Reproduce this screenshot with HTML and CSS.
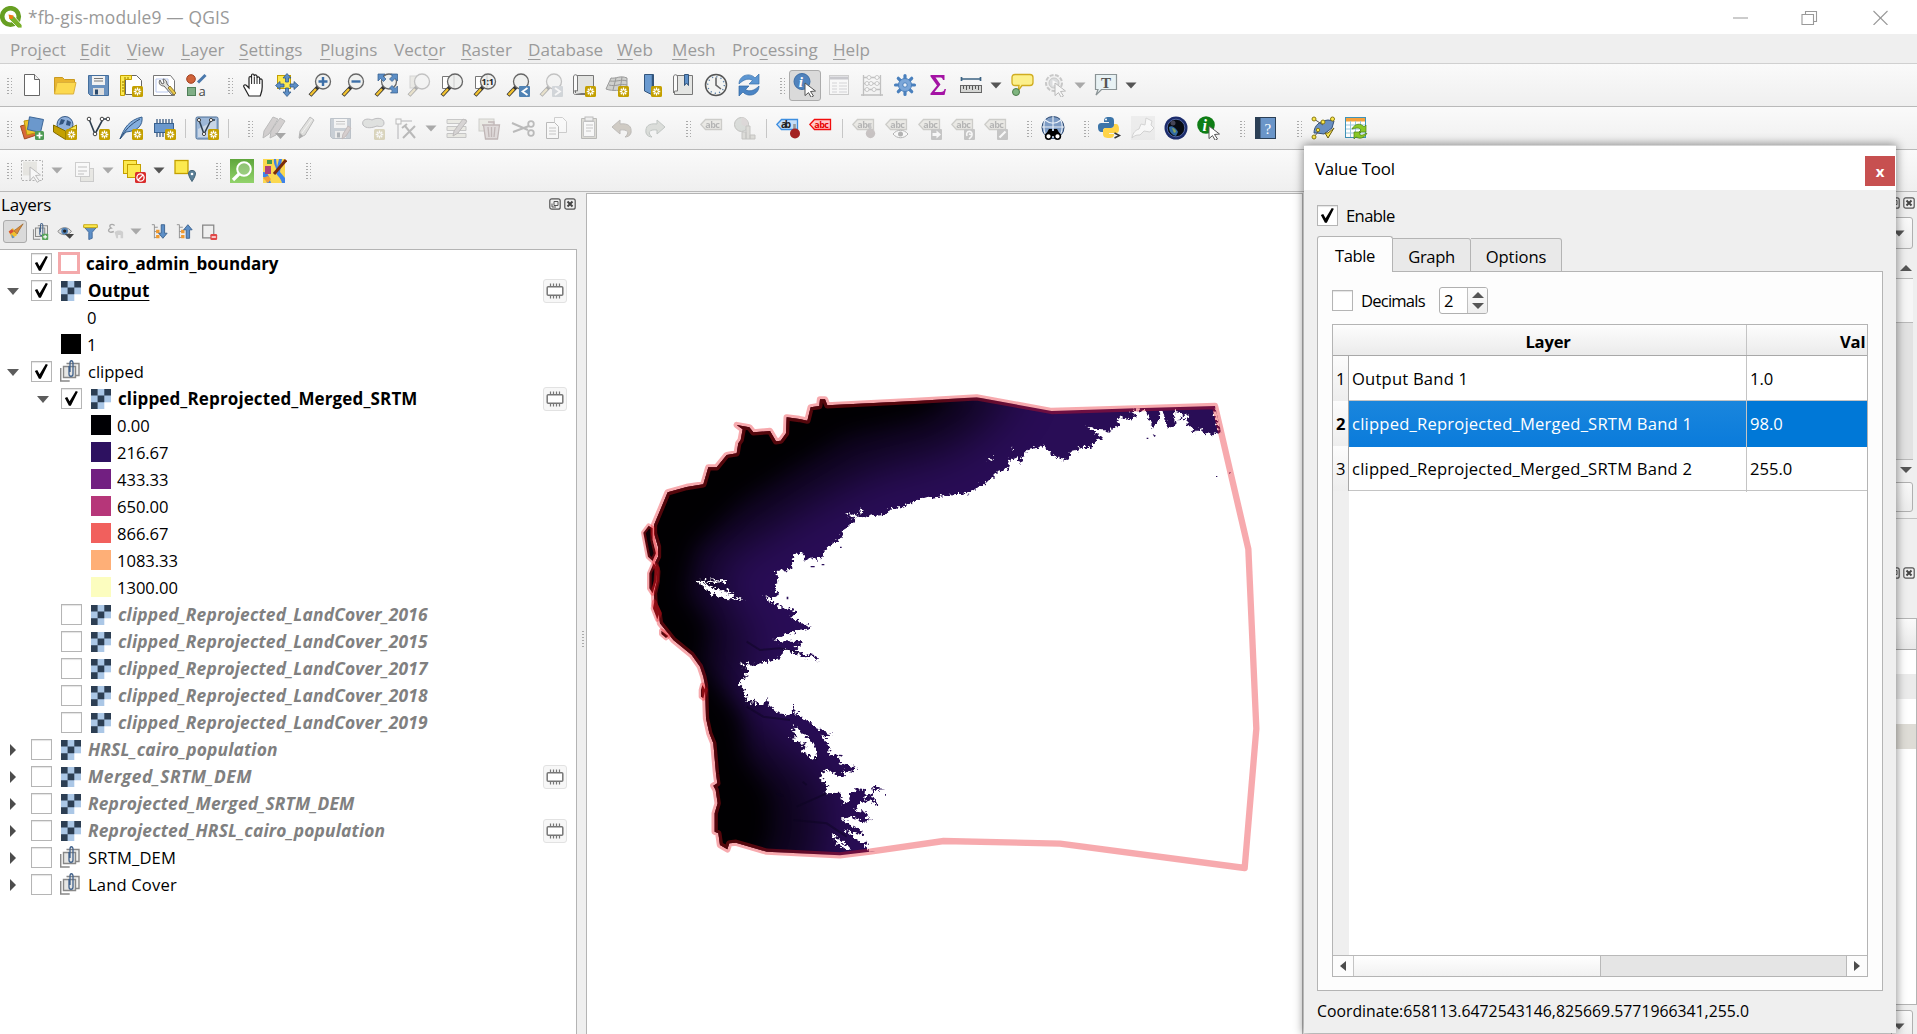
FILE: index.html
```html
<!DOCTYPE html>
<html lang="en">
<head>
<meta charset="utf-8">
<title>*fb-gis-module9 — QGIS</title>
<link rel="stylesheet" href="styles.css">
</head>
<body>
<svg class="defs" width="0" height="0">
<defs>
<linearGradient id="gg" x1="0" y1="0" x2="0" y2="1"><stop offset="0" stop-color="#5fa63c"/><stop offset="1" stop-color="#92d36b"/></linearGradient>
<symbol id="star" viewBox="0 0 24 24"><rect x="13" y="13" width="11" height="11" rx="1.500" fill="#c4a000"/><path d="M18.500 14.500v8M14.700 18.500h7.600M15.800 15.800l5.400 5.400M21.200 15.800l-5.400 5.400" stroke="#fff" stroke-width="1.300"/><circle cx="18.500" cy="18.500" r="1.200" fill="#c4a000"/></symbol>
<symbol id="new" viewBox="0 0 24 24"><path d="M4.500 1.500h10l5 5v16h-15z" fill="#fff" stroke="#666"/><path d="M14.500 1.500v5h5" fill="#eee" stroke="#666"/></symbol>
<symbol id="open" viewBox="0 0 24 24"><path d="M1.500 21V4.500h8l2 2h10V9" fill="#e9b52f" stroke="#c99a20"/><path d="M1.500 21L4 9.500h19L20.500 21z" fill="#fcd94f" stroke="#dcb03a"/></symbol>
<symbol id="save" viewBox="0 0 24 24"><path d="M2.500 2.500h20v20h-18l-2-2z" fill="#6a92c0" stroke="#456f9d"/><rect x="6" y="3" width="13" height="9" fill="#f2f2f2"/><path d="M8 5.500h9M8 8h9" stroke="#777" stroke-width="1.200"/><rect x="7" y="15" width="11" height="7" fill="#ddd"/><rect x="9" y="16.500" width="3" height="5" fill="#2b4a6c"/></symbol>
<symbol id="layout" viewBox="0 0 24 24"><path d="M6.500 2.500h11l5 5v14h-16z" fill="#fff" stroke="#666"/><path d="M1.500 2.500h11v4h-7v16h-4z" fill="#fce94f" stroke="#c4a000"/><path d="M3 9h2M3 12h2M3 15h2M3 18h2M6 4v2M9 4v2" stroke="#8f7600"/><use href="#star"/></symbol>
<symbol id="manager" viewBox="0 0 24 24"><path d="M1.500 2.500h17l4 5v15h-21z" fill="#fff" stroke="#777"/><path d="M4 6h12v13H4z" fill="none" stroke="#b9c8ee"/><path d="M8 7c-2 3 0 6 4 6l8 9 3-2-8-9c0-3-2-5-4-5l1 4-2 1z" fill="#e0e0dc" stroke="#666"/><path d="M16 15l6 7 2-2-6-7z" fill="#e9c94c" stroke="#7a6420" stroke-width=".8"/></symbol>
<symbol id="style" viewBox="0 0 24 24"><circle cx="6" cy="6" r="4.300" fill="#d0633a" stroke="#a04020"/><path d="M13 9.500L20.500 2" stroke="#4a78ac" stroke-width="3"/><rect x="2.500" y="14.500" width="8" height="8" fill="#7fae86" stroke="#4f7f58"/><text x="13.500" y="22.500" font-size="13" font-family="Open Sans,sans-serif" fill="#444">a</text></symbol>
<symbol id="hand" viewBox="0 0 24 24"><path d="M7 23L2 14c-1-2 1-3 2.500-1.500L7 15V5c0-2 2.500-2 2.500 0V2.500c0-2 2.700-2 2.700 0V3c0-1.500 2.800-1.500 2.800.5V5c0-1.500 2.700-1.500 2.700.5V7c0-1.500 2.500-1.500 2.500.5V14c0 4-1 6-2 9z" fill="#fff" stroke="#222" stroke-width="1.200"/><path d="M9.600 5v6M12.300 3.500V11M15 5v6M17.700 7v4" stroke="#222"/></symbol>
<symbol id="pan" viewBox="0 0 24 24"><rect x="2.500" y="2.500" width="13" height="13" fill="#fce94f" stroke="#c4a000"/><g fill="#5d8fc7" stroke="#345c8a" stroke-width=".8"><path d="M12 .5l4 4.500h-2.500v4h-3V5H8zM12 23.500l4-4.500h-2.500v-4h-3v4H8zM.5 12.500l4.500-4v2.500h4v3H5v2.500zM23.500 12.500l-4.500-4v2.500h-4v3h4v2.500z"/></g></symbol>
<symbol id="glass" viewBox="0 0 24 24"><path d="M10 14L2 22.500" stroke="#333" stroke-width="4"/><path d="M8 16L2.500 22" stroke="#f2c230" stroke-width="2.400"/><circle cx="15" cy="8.500" r="7.500" fill="#eff0ef" stroke="#666" stroke-width="1.300"/></symbol>
<symbol id="zin" viewBox="0 0 24 24"><use href="#glass"/><path d="M15 4v9M10.500 8.500h9" stroke="#3d6fa8" stroke-width="2.400"/></symbol>
<symbol id="zout" viewBox="0 0 24 24"><use href="#glass"/><path d="M10.500 8.500h9" stroke="#3d6fa8" stroke-width="2.400"/></symbol>
<symbol id="zfull" viewBox="0 0 24 24"><use href="#glass"/><path d="M4 1h7L9 3l3 3-2.500 2.500-3-3L4 8zM23.500 1h-7l2 2-3 3L18 8.500l3-3L23.500 8zM23.500 20h-7l2-2-3-3 2.500-2.500 3 3 2.500-2.500z" fill="#5d8fc7" stroke="#345c8a" stroke-width=".7"/></symbol>
<symbol id="zsel" viewBox="0 0 24 24"><rect x="3" y="3" width="12" height="12" fill="#d8d5b8" stroke="#999"/><use href="#glass"/></symbol>
<symbol id="zlay" viewBox="0 0 24 24"><path d="M2.500 3.500h7v12h-7z" fill="#fff" stroke="#777"/><use href="#glass"/><path d="M14 2v13" stroke="#ccc"/></symbol>
<symbol id="znat" viewBox="0 0 24 24"><use href="#zlay"/><text x="8.500" y="12" font-size="9" font-weight="bold" font-family="Open Sans,sans-serif" fill="#222">1:1</text></symbol>
<symbol id="zlast" viewBox="0 0 24 24"><use href="#glass"/><rect x="13" y="13" width="11" height="11" rx="1" fill="#5083b5"/><path d="M21.500 15l-5 3.500 5 3.500" fill="none" stroke="#fff" stroke-width="1.800"/></symbol>
<symbol id="znext" viewBox="0 0 24 24"><use href="#glass"/><rect x="13" y="13" width="11" height="11" rx="1" fill="#8da5bd"/><path d="M16 15l5 3.500-5 3.500" fill="none" stroke="#fff" stroke-width="1.800"/></symbol>
<symbol id="nmap" viewBox="0 0 24 24"><path d="M3.500 2.500h18v18h-18z" fill="#e2e3e1" stroke="#777"/><path d="M1.500 20V4c0-3 4-3 4 0v14c-3-1-4 0-4 2 0 1 1 1.500 2 1.500h10" fill="#fafafa" stroke="#777"/><use href="#star"/></symbol>
<symbol id="n3d" viewBox="0 0 24 24"><path d="M6 5c5 1 9-3 16 0v13c-8-2-13 1-21-2z" fill="#cfd0ce" stroke="#999"/><path d="M4 12c7 2 11-2 18 0M11 5L8 17M17 4l-2 13M5 8c7 1 11-2 17 0" fill="none" stroke="#999"/><use href="#star"/></symbol>
<symbol id="bmk" viewBox="0 0 24 24"><path d="M6.500 1.500h9v21L6.500 18z" fill="#6a9ad0" stroke="#33557c"/><path d="M14.500 2v18" stroke="#33557c" stroke-width="1.500"/><use href="#star"/></symbol>
<symbol id="sbm" viewBox="0 0 24 24"><path d="M3.500 2.500h18v19h-18z" fill="#e4e5e3" stroke="#777"/><path d="M2.500 20V4c0-3 4-3 4 0v14h-2c-2 0-2 2 0 3.500" fill="#fafafa" stroke="#777"/><path d="M13.500 1.500h4v11l-2-2.500-2 2.500z" fill="#5d8fc7" stroke="#33557c"/></symbol>
<symbol id="clock" viewBox="0 0 24 24"><circle cx="12" cy="12" r="10.500" fill="#f3f4f2" stroke="#555" stroke-width="1.500"/><circle cx="12" cy="12" r="8.300" fill="none" stroke="#5a7fa8" stroke-width="1.400" stroke-dasharray="1.200 3.150"/><path d="M12 4.500V12l5 4" fill="none" stroke="#666" stroke-width="1.600"/></symbol>
<symbol id="refresh" viewBox="0 0 24 24"><path d="M2 11c0-9 11-12 16-6l4-4v10H12l3.500-3.500C12 5 7 6 2 11z" fill="#5c96d2" stroke="#3b72ae" stroke-width=".7"/><path d="M22 13c0 9-11 12-16 6l-4 4V13h10l-3.500 3.500C12 19 17 18 22 13z" fill="#4a84c4" stroke="#2f66a2" stroke-width=".7"/></symbol>
<symbol id="arrowc" viewBox="0 0 24 24"><path d="M12 10l10.500 8-5 .5 3 4.500-2.300 1.300-2.700-4.700-3.500 3z" fill="#fff" stroke="#555"/></symbol>
<symbol id="ident" viewBox="0 0 24 24"><circle cx="9" cy="8.500" r="8" fill="#5083bd" stroke="#3d6ea5"/><text x="5.800" y="14" font-size="15" font-weight="bold" font-style="italic" font-family="Liberation Serif,serif" fill="#fff">i</text><use href="#arrowc"/></symbol>
<symbol id="table" viewBox="0 0 24 24"><rect x="2.500" y="2.500" width="19" height="19" fill="#fff" stroke="#888"/><path d="M3 5h18" stroke="#779" stroke-width="3"/><path d="M5 10h5M12 10h8M5 13h5M12 13h8M5 16h5M12 16h8M5 19h5M12 19h8" stroke="#99a" stroke-width="1.200"/></symbol>
<symbol id="abacus" viewBox="0 0 24 24"><path d="M3.500 23V2M20.500 23V2M1 22h22M3 4.500h18M3 10.500h18M3 16.500h18" stroke="#666" stroke-width="1.300" fill="none"/><g fill="#fff" stroke="#777"><circle cx="9" cy="4.500" r="2"/><circle cx="17" cy="4.500" r="2"/><circle cx="7" cy="10.500" r="2"/><circle cx="11" cy="10.500" r="2"/><circle cx="17" cy="10.500" r="2"/><circle cx="7" cy="16.500" r="2"/><circle cx="14" cy="16.500" r="2"/></g></symbol>
<symbol id="gear" viewBox="0 0 24 24"><g stroke="#4a80bd" stroke-width="3.200" stroke-linecap="round"><path d="M12 2.500v19M2.500 12h19M5.300 5.300l13.400 13.400M18.700 5.300L5.300 18.700"/></g><circle cx="12" cy="12" r="6.500" fill="#7ba6d8" stroke="#4a80bd"/><circle cx="12" cy="12" r="2.200" fill="#eef3fa" stroke="#4a80bd"/></symbol>
<symbol id="sigma" viewBox="0 0 24 24"><path d="M4.500 2h14v5h-1.500c-.5-2-1.500-2.500-3-2.500H9.500l5 7-6 7.500H15c2 0 3-.8 3.500-3H20L18.500 22h-14v-1.500L11 12.500 4.500 3.500z" fill="#a413a4"/></symbol>
<symbol id="ruler" viewBox="0 0 24 24"><path d="M2.500 6h19M2.500 4v4M21.500 4v4" stroke="#3d6382" stroke-width="1.700"/><rect x="1.500" y="12.500" width="21" height="7" fill="#d5d6d4" stroke="#666"/><path d="M4.500 13v3M7.500 13v4M10.500 13v3M13.500 13v4M16.500 13v3M19.500 13v4" stroke="#555"/></symbol>
<symbol id="tips" viewBox="0 0 24 24"><path d="M5 1.500h15q3 0 3 3v5q0 3-3 3h-8L8 18l1-5.500H5q-3 0-3-3v-5q0-3 3-3z" fill="#fcf08b" stroke="#d0ac20" stroke-width="1.300"/><circle cx="6" cy="19" r="3.500" fill="#7fb57f" stroke="#4c7a4c"/></symbol>
<symbol id="action" viewBox="0 0 24 24"><circle cx="11" cy="10" r="8" fill="#e6e6e6" stroke="#777" stroke-width="2" stroke-dasharray="4 1.500"/><circle cx="11" cy="10" r="5" fill="#a9b3bd" stroke="#777"/><path d="M9.500 7l5 3-5 3z" fill="#fff"/><use href="#arrowc"/></symbol>
<symbol id="tann" viewBox="0 0 24 24"><path d="M1.500 1.500h21v15h-15L2 22l2-5.500H1.500z" fill="#e8f2f4" stroke="#8b9496" stroke-width="1.200"/><text x="7" y="14.500" font-size="15" font-weight="bold" font-family="Liberation Serif,serif" fill="#555">T</text></symbol>
<symbol id="dsm" viewBox="0 0 24 24"><path d="M.5 10l12-3 4 12-12 4z" fill="#d9693a" stroke="#a14a20"/><path d="M4 5l12-2 3 13-12 3z" fill="#edc42c" stroke="#b8930c"/><path d="M9.500 .8l14 2.700-3 13-13-3z" fill="#6b98cc" stroke="#3d6697"/><rect x="15" y="15" width="9" height="9" rx="1.500" fill="#4e9a54"/><path d="M19.500 16.500v6M16.500 19.500h6" stroke="#fff" stroke-width="1.700"/></symbol>
<symbol id="gpkg" viewBox="0 0 24 24"><circle cx="12" cy="8.500" r="8" fill="#8fb0dc" stroke="#385b86"/><path d="M8 3l4 1-2 4-4 1zM14 4l4 2-1 4-4-1z" fill="#31547f"/><path d="M.5 9l12 6v8.500L.5 16z" fill="#c4a000" stroke="#806a00"/><path d="M23.500 9l-11 6v8.500l11-5z" fill="#fce94f" stroke="#a08500"/><use href="#star"/></symbol>
<symbol id="shp" viewBox="0 0 24 24"><path d="M3 3l6 15L17 3h5" fill="none" stroke="#2e3f50" stroke-width="1.600"/><g fill="#fff" stroke="#444"><circle cx="3" cy="3" r="1.800"/><circle cx="9" cy="18" r="1.800"/><circle cx="16" cy="3" r="1.800"/><circle cx="22" cy="3" r="1.800"/></g><use href="#star"/></symbol>
<symbol id="feather" viewBox="0 0 24 24"><path d="M1 23C5 12 10 4 23 1c1 8-4 14-16 15z" fill="#84aedd" stroke="#38618f"/><path d="M1 23C6 14 12 8 21 3" fill="none" stroke="#2c4d74"/><use href="#star"/></symbol>
<symbol id="chip" viewBox="0 0 24 24"><path d="M5 3v18M8 3v18M11 3v18M14 3v18M17 3v18M20 3v18" stroke="#3a5a80" stroke-width="1.300"/><rect x="2.500" y="7.500" width="19" height="9" fill="#6b98cc" stroke="#38618f"/><use href="#star"/></symbol>
<symbol id="virt" viewBox="0 0 24 24"><rect x="1" y="1" width="22" height="22" rx="1.500" fill="#9db8d8" stroke="#4a6c94"/><path d="M3 21V13L21 4v17z" fill="#c9d6e6"/><path d="M4 4l5 14 7-14h4" fill="none" stroke="#2e3f50" stroke-width="1.500"/><g fill="#fff" stroke="#444"><circle cx="4" cy="4" r="1.600"/><circle cx="9" cy="18" r="1.600"/><circle cx="16" cy="4" r="1.600"/></g><use href="#star"/></symbol>
<symbol id="pencil" viewBox="0 0 24 24"><path d="M4 22l1-7L15 1l4 3L10 19z" fill="#bbb9a9" stroke="#555"/><path d="M17 3L7 17" stroke="#eee"/><path d="M4 23l1-6 3 3z" fill="#333"/></symbol>
<symbol id="pencils" viewBox="0 0 24 24"><path d="M1 22l1-7L11 1l5 2L7 18zM8 22l1-7L18 2l5 3-9 14z" fill="#a08c8c" stroke="#555"/><path d="M13 17h11l-5.500 6z" fill="#222"/></symbol>
<symbol id="saveed" viewBox="0 0 24 24"><use href="#save"/><path d="M14 23l1-5 5-8 3 2-5 8z" fill="#b88" stroke="#855"/></symbol>
<symbol id="poly" viewBox="0 0 24 24"><path d="M2 9c-2-6 5-7 9-5 5-3 12-2 12 3 0 4-4 4-7 3-5 2-11 3-14-1z" fill="#b5bfb5" stroke="#556"/><use href="#star"/></symbol>
<symbol id="vertex" viewBox="0 0 24 24"><path d="M4 23V5h14" fill="none" stroke="#445"/><rect x="2" y="3" width="5" height="5" fill="#fff" stroke="#555"/><path d="M9 22L21 10M11 10l10 12M8 12l5-4" stroke="#555" stroke-width="2"/></symbol>
<symbol id="multi" viewBox="0 0 24 24"><path d="M2 3.500h19v4H2zM2 10.500h19v4H2zM2 17.500h19v4H2z" fill="#d9d6b0" stroke="#777"/><path d="M8 20l1-5 9-12 4 2-9 12z" fill="#a99" stroke="#655"/></symbol>
<symbol id="trash" viewBox="0 0 24 24"><rect x="1" y="3" width="15" height="12" fill="#d9d6b0" stroke="#887"/><path d="M4 9h18M10 6h6v3M5.500 9l2 14h12l2-14zM10 11l1 10M13.500 11v10M17 11l-1 10" fill="#caa" stroke="#844" stroke-width="1.300"/></symbol>
<symbol id="cut" viewBox="0 0 24 24"><path d="M1 7l16 7M2 16l16-6" stroke="#555" stroke-width="2"/><circle cx="20" cy="8" r="2.800" fill="none" stroke="#555" stroke-width="1.800"/><circle cx="20" cy="17" r="2.800" fill="none" stroke="#555" stroke-width="1.800"/></symbol>
<symbol id="copy" viewBox="0 0 24 24"><path d="M10.500 1.500h8l4 4v11h-12z" fill="#fff" stroke="#888"/><path d="M2.500 6.500h8l4 4v12h-12z" fill="#fff" stroke="#555"/><path d="M5 12h7M5 15h7M5 18h7" stroke="#777"/></symbol>
<symbol id="paste" viewBox="0 0 24 24"><path d="M4.500 2.500h15v20h-15z" fill="#b9b08c" stroke="#554"/><path d="M6.500 5.500h11v15h-11z" fill="#fff" stroke="#777"/><rect x="8" y="1" width="8" height="4" fill="#ddd" stroke="#555"/><path d="M9 9h7M9 12h7M9 15h5" stroke="#777"/></symbol>
<symbol id="undo" viewBox="0 0 24 24"><path d="M2 11l8-7v4c8-1 12 2 11 9-1 3-4 4-6 4 5-4 3-8-5-7v4z" fill="#a08250" stroke="#654"/></symbol>
<symbol id="redo" viewBox="0 0 24 24"><path d="M22 11l-8-7v4C6 7 2 10 3 17c1 3 4 4 6 4-5-4-3-8 5-7v4z" fill="#a8b8a0" stroke="#576"/></symbol>
<symbol id="lab" viewBox="0 0 24 24"><path d="M.8 8.500L5.500 3.500h16v10h-16z" fill="#d8d4b8" stroke="#88866e" stroke-width="1.300"/><text x="5.300" y="11.800" font-size="9" font-weight="bold" font-family="Open Sans,sans-serif" fill="#444" textLength="14.500">abc</text></symbol>
<symbol id="labpin" viewBox="0 0 24 24"><use href="#lab"/><circle cx="18.500" cy="17.500" r="4.700" fill="#8a6a6a"/><path d="M18 7v7" stroke="#777" stroke-width="2.500"/></symbol>
<symbol id="labeye" viewBox="0 0 24 24"><use href="#lab"/><path d="M8 18c4-5 11-5 15 0-4 5-11 5-15 0z" fill="#fff" stroke="#444"/><circle cx="15.500" cy="18" r="2.500" fill="#444"/></symbol>
<symbol id="labmov" viewBox="0 0 24 24"><use href="#lab"/><rect x="13" y="13" width="11" height="11" rx="1" fill="#777"/><path d="M14.500 18.500h5" stroke="#fff" stroke-width="3"/><path d="M18.500 14.500l4.500 4-4.500 4z" fill="#fff"/></symbol>
<symbol id="labrot" viewBox="0 0 24 24"><use href="#lab"/><rect x="13" y="13" width="11" height="11" rx="1" fill="#777"/><path d="M16 20c-2-6 6-6 5-1l-3-1M21 20l-3 3" fill="none" stroke="#fff" stroke-width="1.600"/></symbol>
<symbol id="labed" viewBox="0 0 24 24"><use href="#lab"/><rect x="13" y="13" width="11" height="11" rx="1" fill="#777"/><path d="M15.500 21.500l6-6" stroke="#fff" stroke-width="2.200"/></symbol>
<symbol id="labblue" viewBox="0 0 24 24"><path d="M.8 8.500L5.500 3.500h16v10h-16z" fill="#c5def8" stroke="#3d8ee0" stroke-width="1.300"/><text x="5" y="11.800" font-size="10" font-weight="bold" font-family="Open Sans,sans-serif" fill="#222" textLength="10">ab</text><path d="M18.500 8v7" stroke="#999" stroke-width="2.600"/><circle cx="19" cy="17.500" r="5" fill="#a42222"/></symbol>
<symbol id="labred" viewBox="0 0 24 24"><path d="M.8 8.500L5.500 3.500h16v10h-16z" fill="#ffc9c9" stroke="#f20d0d" stroke-width="1.300"/><text x="5.300" y="11.800" font-size="9" font-weight="bold" font-family="Open Sans,sans-serif" fill="#e60000" textLength="14.500">abc</text></symbol>
<symbol id="diag" viewBox="0 0 24 24"><circle cx="8.500" cy="8.500" r="7" fill="#a0b5a0" stroke="#665"/><path d="M8.500 8.500V1.500a7 7 0 0 1 6 10z" fill="#c0a0a0"/><path d="M9 23v-7h4v7zM13 23V10h4v13zM17 23v-4h5v4z" fill="#b9b39a" stroke="#776"/></symbol>
<symbol id="meta" viewBox="0 0 24 24"><circle cx="12" cy="11.500" r="11" fill="#7e9cc4" stroke="#2c4870"/><path d="M1 11h22M12 0v22M4 4c5 4 11 4 16 0M5 0c-3 8-3 14 0 20M19 1c3 8 3 12 0 19" fill="none" stroke="#eaf0f8" stroke-width="1.100"/><path d="M4 20l4-7h3v2h2v-2h3l4 7z" fill="#000"/><circle cx="7.500" cy="20.300" r="2.900" fill="#fff" stroke="#000" stroke-width="1.600"/><circle cx="16.500" cy="20.300" r="2.900" fill="#fff" stroke="#000" stroke-width="1.600"/></symbol>
<symbol id="py" viewBox="0 0 24 24"><path d="M6 6c0-4 1-5 5-5s5 1 5 4v4c0 2-1 3-3 3H8c-2 0-3 1-3 3v1H4c-3 0-4-2-4-5s1-4 4-4h7V6z" fill="#3c75a9"/><path d="M16 8h2c2 0 3 2 3 5s-1 4-3 4h-7v1h5c0 3-1 4-5 4s-6-1-6-4v-3c0-2 1-3 3-3h5c2 0 3-1 3-3z" fill="#ffd448"/><circle cx="8" cy="3.500" r="1" fill="#fff"/><path d="M16.500 17l5 2.500-5 2.500" fill="none" stroke="#333" stroke-width="1.400"/></symbol>
<symbol id="plug" viewBox="0 0 24 24"><rect width="24" height="24" fill="#ddd"/><path d="M1 22c1-6 4-8 7-9l2-5 4 1 1-7 6 3-1 4 3 3-4 4-6-1-4 4c-3 0-5 0-8 3z" fill="#fff" stroke="#999"/></symbol>
<symbol id="globe" viewBox="0 0 24 24"><circle cx="12" cy="12" r="11.500" fill="#1c2c6c"/><circle cx="12" cy="12" r="8.800" fill="#070b12" stroke="#6278b8" stroke-width=".8"/><path d="M5 11c3-2 7 1 9 5l-2 4c-4-1-7-4-7-9z" fill="#326ba4"/><path d="M8 12c2 0 4 2 4 4l-2 1z" fill="#85a45f"/><circle cx="9" cy="7" r="2.500" fill="#445"/></symbol>
<symbol id="ginfo" viewBox="0 0 24 24"><circle cx="9" cy="9" r="8.800" fill="#0f7d16"/><text x="5.500" y="14.500" font-size="16" font-weight="bold" font-style="italic" font-family="Liberation Serif,serif" fill="#fff">i</text><use href="#arrowc"/></symbol>
<symbol id="help" viewBox="0 0 24 24"><rect x="1.500" y="1.500" width="20" height="21" fill="#6a95c8" stroke="#2b3f55"/><rect x="1.500" y="1.500" width="5" height="21" fill="#2b3f55"/><text x="10.500" y="17.500" font-size="15" font-family="Liberation Serif,serif" fill="#fff">?</text></symbol>
<symbol id="topo" viewBox="0 0 24 24"><path d="M3 17C3 9 9 5 17 4l6 1-2 7-8 6-7-1z" fill="#6a8fc0" stroke="#33517a"/><path d="M3 3l9 6M3 21l4-5" stroke="#555"/><g fill="#fce94f" stroke="#8a7a10"><circle cx="3" cy="3" r="2"/><circle cx="21.500" cy="3" r="2"/><circle cx="12" cy="6" r="2"/><circle cx="3" cy="21" r="2"/><circle cx="7" cy="14" r="1.700"/></g><path d="M14 17l3 5 6-10-6 5z" fill="#fce94f" stroke="#6a5c10"/></symbol>
<symbol id="tref" viewBox="0 0 24 24"><rect x="1.500" y="1.500" width="20" height="20" fill="#fff" stroke="#3f93b8"/><rect x="2" y="2" width="19" height="3.500" fill="#f5a13d"/><path d="M2 9h19M2 13h19M2 17h19M6.500 5v16M11.500 5v16M16.500 5v16" stroke="#9cc8dc"/><path d="M8 13c3-6 9-6 12-2l2-2v7h-7l2-2c-2-3-5-2-9 -1zM23 17c-3 6-8 6-11 4l-2 2v-7h7l-2 2c2 2 4 1 8-1z" fill="#8ac926" stroke="#4c7f10" stroke-width=".7"/></symbol>
<symbol id="selr" viewBox="0 0 24 24"><rect x="1.500" y="1.500" width="21" height="20" fill="none" stroke="#444" stroke-dasharray="2 1.500"/><rect x="3" y="2.500" width="14" height="14" fill="#cfcab0"/><path d="M10 8l10.500 8-5 .5 4 5.500-2.300 1.300-3.700-5.700-3.500 4z" fill="#fff" stroke="#555"/></symbol>
<symbol id="self" viewBox="0 0 24 24"><rect x="9.500" y="9.500" width="13" height="13" fill="#d6d2bb" stroke="#888"/><rect x="4.500" y="3.500" width="14" height="14" fill="#fff" stroke="#888"/><path d="M7 8h9M7 12h9M7 15h6" stroke="#999" stroke-width="1.600"/></symbol>
<symbol id="desel" viewBox="0 0 24 24"><rect x="1.500" y="1.500" width="13" height="13" fill="#fce94f" stroke="#c4a000"/><rect x="5.500" y="5.500" width="13" height="13" fill="#fce94f" stroke="#c4a000"/><rect x="13" y="13" width="11" height="11" rx="1.500" fill="#d92c2c"/><circle cx="18.500" cy="18.500" r="3.600" fill="none" stroke="#fff" stroke-width="1.300"/><path d="M16 21l5-5" stroke="#fff" stroke-width="1.300"/></symbol>
<symbol id="selloc" viewBox="0 0 24 24"><rect x="2" y="1.500" width="13" height="13" fill="#fce94f" stroke="#c4a000" stroke-width="1.300"/><path d="M19 22.500c-6-9-3-11 0-11s6 2 0 11z" fill="#5b8098" stroke="#436377"/><circle cx="19" cy="15" r="1.300" fill="#fff"/></symbol>
<symbol id="gsearch" viewBox="0 0 24 24"><rect width="24" height="24" fill="url(#gg)"/><circle cx="14" cy="10" r="6.800" fill="#b5d8a4" fill-opacity=".5" stroke="#fff" stroke-width="2"/><path d="M9 15l-6 6" stroke="#fff" stroke-width="3.200"/></symbol>
<symbol id="mapb" viewBox="0 0 24 24"><rect width="22" height="24" fill="#fbd84f"/><path d="M0 13c6 0 6 6 8 11H4c-1-4-2-6-4-6zM11 0c-1 6 3 8 2 12s5 6 6 12h3v-5l-5-6 2-13h-3l-2 8-1-8z" fill="#3f83e8"/><rect x="2" y="7" width="6" height="8" fill="#b0407a"/><rect x="4" y="1" width="5" height="4" fill="#4a9a4a"/><path d="M0 19l5-2 3 3-3 4z" fill="#f3a23a"/><path d="M11 15L23 1" stroke="#7b2d0c" stroke-width="3"/></symbol>
<symbol id="dd" viewBox="0 0 12 7"><path d="M.5.5h11l-5.500 6z"/></symbol>
<symbol id="ras" viewBox="0 0 20 20"><rect width="20" height="20" fill="#abc7e6"/><path d="M0 0h6.600v6.600H0zM13.300 0H20v6.600h-6.700zM6.600 6.600h6.700v6.700H6.600zM0 13.300h6.600V20H0z" fill="#2c3e53"/><path d="M13.300 13.300H20V20h-6.700z" fill="#fff"/></symbol>
<symbol id="grp" viewBox="0 0 20 22"><path d="M.7 8v13h9" fill="none" stroke="#888" stroke-width="1.500"/><path d="M6.500 3.500h12.500v12h-3" fill="#f2f2f0" stroke="#888" stroke-width="1.400"/><path d="M3.500 6.500h12v11h-12z" fill="#e6e6e4" stroke="#888" stroke-width="1.400"/><path d="M9 6v8c0 3 4 3 4 0V3c0-3-3-3-3 0v9" fill="none" stroke="#41618a" stroke-width="1.300"/></symbol>
<symbol id="mem" viewBox="0 0 20 20"><path d="M5.500 2.500v15M8.500 2.500v15M11.500 2.500v15M14.500 2.500v15" stroke="#777" stroke-width="1.200"/><rect x="2.200" y="5.700" width="15.600" height="8.600" rx="1" fill="#fff" stroke="#777" stroke-width="1.500"/></symbol>
<symbol id="chk" viewBox="0 0 20 20"><path d="M3 9.500l2.500-1 2.500 4.500L14.500 2l2.200 .8L9.300 17.500H7.300z" fill="#000"/></symbol>
<symbol id="float" viewBox="0 0 12 12"><rect x=".8" y=".8" width="10.400" height="10.400" rx="2" fill="none" stroke="#555" stroke-width="1.200"/><path d="M5 3.500h4v4H5zM3 5.500v3.500h4" fill="none" stroke="#555"/></symbol>
<symbol id="close" viewBox="0 0 12 12"><rect x=".8" y=".8" width="10.400" height="10.400" rx="2" fill="none" stroke="#555" stroke-width="1.200"/><path d="M3.500 3.500l5 5M8.500 3.500l-5 5" stroke="#444" stroke-width="2"/></symbol>
</defs>
</svg>

<div class="app">
<header class="titlebar">
  <svg class="logo" viewBox="0 0 22 22"><circle cx="10.500" cy="10.500" r="8.300" fill="none" stroke="#679f22" stroke-width="4.600"/><path d="M9 9l5 1 8 9v3h-4L9 13z" fill="#7ab02a" stroke="#fff" stroke-width=".8"/><path d="M8.500 8.500l5 1-1 3.500-3 0z" fill="#ee7913"/></svg>
  <span class="apptitle">*fb-gis-module9 — QGIS</span>
  <svg class="winctl" viewBox="0 0 160 16"><path d="M0 9h15M69 5.500h11.500v10H69zM72.500 5V2.500h11v10H81M140.500 2l14 14M154.500 2l-14 14" fill="none" stroke="#999" stroke-width="1.100"/></svg>
</header>
<nav class="menubar">
  <span>Pro<u>j</u>ect</span><span><u>E</u>dit</span><span><u>V</u>iew</span><span><u>L</u>ayer</span><span><u>S</u>ettings</span><span><u>P</u>lugins</span><span>Vect<u>o</u>r</span><span><u>R</u>aster</span><span><u>D</u>atabase</span><span><u>W</u>eb</span><span><u>M</u>esh</span><span>Pro<u>c</u>essing</span><span><u>H</u>elp</span>
</nav>

<div class="toolbar">
  <i class="grip first"></i>
  <svg><use href="#new"/></svg><svg><use href="#open"/></svg><svg><use href="#save"/></svg><svg><use href="#layout"/></svg><svg><use href="#manager"/></svg><svg><use href="#style"/></svg>
  <i class="grip"></i>
  <svg><use href="#hand"/></svg><svg><use href="#pan"/></svg><svg><use href="#zin"/></svg><svg><use href="#zout"/></svg><svg><use href="#zfull"/></svg><svg class="off"><use href="#zsel"/></svg><svg><use href="#zlay"/></svg><svg><use href="#znat"/></svg><svg><use href="#zlast"/></svg><svg class="off"><use href="#znext"/></svg><svg><use href="#nmap"/></svg><svg><use href="#n3d"/></svg><svg><use href="#bmk"/></svg><svg><use href="#sbm"/></svg><svg><use href="#clock"/></svg><svg><use href="#refresh"/></svg>
  <i class="grip"></i>
  <b class="pressed"><svg><use href="#ident"/></svg></b><svg class="off"><use href="#table"/></svg><svg class="off"><use href="#abacus"/></svg><svg><use href="#gear"/></svg><svg><use href="#sigma"/></svg><svg><use href="#ruler"/></svg><svg class="dd"><use href="#dd"/></svg><svg><use href="#tips"/></svg><svg class="off"><use href="#action"/></svg><svg class="dd dim"><use href="#dd"/></svg><svg><use href="#tann"/></svg><svg class="dd"><use href="#dd"/></svg>
</div>

<div class="toolbar">
  <i class="grip first"></i>
  <svg><use href="#dsm"/></svg><svg><use href="#gpkg"/></svg><svg><use href="#shp"/></svg><svg><use href="#feather"/></svg><svg><use href="#chip"/></svg><i class="sep"></i><svg><use href="#virt"/></svg><i class="sep"></i>
  <i class="grip"></i>
  <svg class="off"><use href="#pencils"/></svg><svg class="off"><use href="#pencil"/></svg><svg class="off"><use href="#saveed"/></svg><svg class="off"><use href="#poly"/></svg><svg class="off"><use href="#vertex"/></svg><svg class="dd dim"><use href="#dd"/></svg><svg class="off"><use href="#multi"/></svg><svg class="off"><use href="#trash"/></svg><svg class="off"><use href="#cut"/></svg><svg class="off"><use href="#copy"/></svg><svg class="off"><use href="#paste"/></svg><svg class="off"><use href="#undo"/></svg><svg class="off"><use href="#redo"/></svg>
  <i class="grip"></i>
  <svg class="off"><use href="#lab"/></svg><svg class="off"><use href="#diag"/></svg><i class="sep"></i><svg><use href="#labblue"/></svg><svg><use href="#labred"/></svg><i class="sep"></i><svg class="off"><use href="#labpin"/></svg><svg class="off"><use href="#labeye"/></svg><svg class="off"><use href="#labmov"/></svg><svg class="off"><use href="#labrot"/></svg><svg class="off"><use href="#labed"/></svg>
  <i class="grip"></i><svg><use href="#meta"/></svg>
  <i class="grip"></i><svg><use href="#py"/></svg><svg class="off"><use href="#plug"/></svg><svg><use href="#globe"/></svg><svg><use href="#ginfo"/></svg>
  <i class="grip"></i><svg><use href="#help"/></svg>
  <i class="grip"></i><svg><use href="#topo"/></svg><svg><use href="#tref"/></svg>
</div>

<div class="toolbar last">
  <i class="grip first"></i>
  <svg class="off"><use href="#selr"/></svg><svg class="dd dim"><use href="#dd"/></svg><svg class="off"><use href="#self"/></svg><svg class="dd dim"><use href="#dd"/></svg><svg><use href="#desel"/></svg><svg class="dd"><use href="#dd"/></svg><svg><use href="#selloc"/></svg>
  <i class="grip"></i><svg><use href="#gsearch"/></svg><svg><use href="#mapb"/></svg><i class="grip"></i>
</div>

<main class="work">
<section class="layers">
  <div class="dockhead"><span>Layers</span><svg class="db"><use href="#float"/></svg><svg class="db"><use href="#close"/></svg></div>
  <div class="ltools">
    <b class="lbtn"><svg viewBox="0 0 20 20"><path d="M2 10l5-4 5 8-6 4z" fill="#f0c030"/><path d="M2 10l4-3 2 3-4 3z" fill="#d94f3a"/><path d="M5 13l4 4-3 1z" fill="#5d8fc7"/><path d="M8 9l3-2 8-6-5 8-2 4z" fill="#d98b38" stroke="#8f5a1d" stroke-width=".7"/></svg></b>
    <svg viewBox="0 0 20 22"><use href="#grp"/><rect x="12" y="14" width="8" height="8" rx="1" fill="#5aa55a"/><path d="M16 15.500v5M13.500 18h5" stroke="#fff" stroke-width="1.400"/></svg>
    <svg viewBox="0 0 20 20"><path d="M1 10c4-6 12-6 16 0-4 5-12 5-16 0z" fill="#ddd" stroke="#777"/><circle cx="9" cy="9.500" r="4" fill="#4f7fb3"/><circle cx="9" cy="9.500" r="2" fill="#222"/><path d="M9 13h11l-5 5.500z" fill="#444"/></svg>
    <svg viewBox="0 0 20 20"><path d="M2 4h16l-6 7v7l-4 1.500V11z" fill="#5d8fc7" stroke="#3d6697"/><path d="M2 2h16v3.500H2z" fill="#fce94f" stroke="#c4a000"/></svg>
    <svg viewBox="0 0 20 20" class="off"><path d="M9 3C5 0 1 3 5 6c-5 1-4 7 3 4" fill="none" stroke="#333" stroke-width="1.600"/><path d="M9 11c2-3 9-3 10 0v7h-3v-4l-3 0v4h-2z" fill="#999"/></svg>
    <svg class="dd dim"><use href="#dd"/></svg>
    <svg viewBox="0 0 20 20"><path d="M1 2h3v16M4 5h4M4 10h4M4 17h4" fill="none" stroke="#888"/><path d="M6 8h4v4H6zM6 14h4v4H6z" fill="#f09a30"/><path d="M12 2h4v10h3l-5 6-5-6h3z" fill="#5d8fc7" stroke="#345c8a"/></svg>
    <svg viewBox="0 0 20 20"><path d="M1 2h3v16M4 5h4M4 10h4M4 17h4" fill="none" stroke="#888"/><path d="M6 8h4v4H6zM6 14h4v4H6z" fill="#f09a30"/><path d="M12 18h4V8h3l-5-6-5 6h3z" fill="#5d8fc7" stroke="#345c8a"/></svg>
    <svg viewBox="0 0 20 20"><rect x="2" y="2.500" width="13" height="15" fill="none" stroke="#888" stroke-width="1.500"/><rect x="11" y="13" width="8" height="7" rx="1.500" fill="#e04848"/><path d="M12.500 16.500h5" stroke="#fff" stroke-width="1.600"/></svg>
  </div>
  <div class="tree">
    <div class="row"><i class="tw"></i><i class="cb"><svg><use href="#chk"/></svg></i><i class="bnd"></i><span class="nm bold bn">cairo_admin_boundary</span></div>
    <div class="row"><i class="tw dn"></i><i class="cb"><svg><use href="#chk"/></svg></i><svg class="ic"><use href="#ras"/></svg><span class="nm bold un">Output</span><i class="mem"><svg><use href="#mem"/></svg></i></div>
    <div class="row lg1"><i class="sw white"></i><span class="nm">0</span></div>
    <div class="row lg1"><i class="sw k"></i><span class="nm">1</span></div>
    <div class="row"><i class="tw dn"></i><i class="cb"><svg><use href="#chk"/></svg></i><svg class="ic g"><use href="#grp"/></svg><span class="nm">clipped</span></div>
    <div class="row sub"><i class="tw dn"></i><i class="cb"><svg><use href="#chk"/></svg></i><svg class="ic"><use href="#ras"/></svg><span class="nm bold long">clipped_Reprojected_Merged_SRTM</span><i class="mem"><svg><use href="#mem"/></svg></i></div>
    <div class="row lg2"><i class="sw c0"></i><span class="nm">0.00</span></div>
    <div class="row lg2"><i class="sw c1"></i><span class="nm">216.67</span></div>
    <div class="row lg2"><i class="sw c2"></i><span class="nm">433.33</span></div>
    <div class="row lg2"><i class="sw c3"></i><span class="nm">650.00</span></div>
    <div class="row lg2"><i class="sw c4"></i><span class="nm">866.67</span></div>
    <div class="row lg2"><i class="sw c5"></i><span class="nm">1083.33</span></div>
    <div class="row lg2"><i class="sw c6"></i><span class="nm">1300.00</span></div>
    <div class="row sub"><i class="tw"></i><i class="cb"></i><svg class="ic"><use href="#ras"/></svg><span class="nm hid">clipped_Reprojected_LandCover_2016</span></div>
    <div class="row sub"><i class="tw"></i><i class="cb"></i><svg class="ic"><use href="#ras"/></svg><span class="nm hid">clipped_Reprojected_LandCover_2015</span></div>
    <div class="row sub"><i class="tw"></i><i class="cb"></i><svg class="ic"><use href="#ras"/></svg><span class="nm hid">clipped_Reprojected_LandCover_2017</span></div>
    <div class="row sub"><i class="tw"></i><i class="cb"></i><svg class="ic"><use href="#ras"/></svg><span class="nm hid">clipped_Reprojected_LandCover_2018</span></div>
    <div class="row sub"><i class="tw"></i><i class="cb"></i><svg class="ic"><use href="#ras"/></svg><span class="nm hid">clipped_Reprojected_LandCover_2019</span></div>
    <div class="row"><i class="tw rt"></i><i class="cb"></i><svg class="ic"><use href="#ras"/></svg><span class="nm hid">HRSL_cairo_population</span></div>
    <div class="row"><i class="tw rt"></i><i class="cb"></i><svg class="ic"><use href="#ras"/></svg><span class="nm hid caps">Merged_SRTM_DEM</span><i class="mem"><svg><use href="#mem"/></svg></i></div>
    <div class="row"><i class="tw rt"></i><i class="cb"></i><svg class="ic"><use href="#ras"/></svg><span class="nm hid">Reprojected_Merged_SRTM_DEM</span></div>
    <div class="row"><i class="tw rt"></i><i class="cb"></i><svg class="ic"><use href="#ras"/></svg><span class="nm hid">Reprojected_HRSL_cairo_population</span><i class="mem"><svg><use href="#mem"/></svg></i></div>
    <div class="row"><i class="tw rt"></i><i class="cb"></i><svg class="ic g"><use href="#grp"/></svg><span class="nm up4">SRTM_DEM</span></div>
    <div class="row"><i class="tw rt"></i><i class="cb"></i><svg class="ic g"><use href="#grp"/></svg><span class="nm up4">Land Cover</span></div>
  </div>
</section>
<div class="split"><i></i></div>
<section class="map">
<svg viewBox="-99 -558 2145 2520" width="715" height="840">
<defs>
<path id="bound" d="M1785 78L1545 85 1295 93 1070 52 900 62 622 76 615 58 600 58 598 78 572 82 562 122 538 117 500 112 498 160 482 182 468 184 450 153 400 157 388 142 350 135 368 148 362 180 355 190 350 220 320 225 290 262 265 262 250 313 200 321 143 337 102 435 102 460 114 500 114 530 105 548 112 575 110 605 102 640 104 675 116 700 120 730 160 780 215 825 240 860 250 890 255 915 258 1015 268 1060 280 1090 288 1180 292 1210 280 1217 287 1230 293 1270 284 1300 284 1355 295 1360 300 1395 322 1408 328 1390 348 1388 440 1415 660 1426 750 1415 971 1383 1320 1391 1874 1464 1909 1046 1885 507Z"/>
<path id="isl" d="M86 437L70 458 84 530 98 543 108 520 98 480 98 445ZM101 550L88 580 88 625 98 640 110 600 112 565ZM103 665L99 685 112 718 118 700ZM124 752L124 762 138 774 145 768ZM247 915L243 930 243 950 250 955 256 930Z"/>
<path id="sea" d="M1790 70L1785 84 1780 100 1790 130 1803 150 1790 155 1780 163 1760 160 1745 150 1725 157 1715 140 1703 135 1702 100 1688 118 1672 122 1690 105 1680 96 1663 92 1662 105 1670 130 1655 147 1640 137 1630 100 1624 92 1618 110 1612 130 1600 145 1590 125 1580 100 1577 92 1550 90 1530 95 1552 108 1535 115 1520 120 1503 106 1490 120 1500 132 1480 145 1465 155 1445 148 1400 143 1425 157 1448 175 1430 180 1422 195 1405 205 1390 200 1375 202 1370 214 1350 215 1345 240 1320 236 1300 225 1265 195 1250 208 1235 198 1215 222 1200 250 1190 232 1170 240 1162 268 1135 275 1105 305 1080 315 1055 335 1030 342 1000 342 960 350 940 352 900 358 870 370 850 380 815 385 800 402 755 405 725 415 705 405 690 400 705 420 690 435 665 455 665 470 640 490 615 510 610 530 590 540 570 532 555 545 550 520 530 518 515 535 517 555 505 570 470 573 475 600 463 625 475 645 455 660 433 645 443 662 470 670 480 685 520 688 530 700 508 710 550 730 575 745 540 750 490 765 460 780 485 785 515 782 545 784 545 797 520 798 535 812 558 828 575 820 590 830 595 843 575 828 557 838 545 827 520 818 495 808 478 835 440 845 405 855 358 850 385 865 372 890 387 885 355 908 375 930 380 960 400 972 402 955 412 975 433 975 438 953 446 975 475 1000 512 1005 521 968 524 995 555 1020 600 1050 638 1065 605 1066 628 1095 628 1125 662 1128 655 1150 710 1163 690 1178 670 1170 675 1192 640 1180 615 1168 600 1195 625 1220 615 1240 660 1238 670 1270 688 1262 690 1240 710 1228 735 1230 733 1255 752 1245 760 1218 795 1228 765 1230 757 1250 775 1275 745 1260 720 1270 705 1292 740 1295 740 1315 760 1318 735 1328 700 1310 665 1320 700 1340 728 1355 725 1365 675 1350 700 1370 728 1390 748 1380 735 1400 750 1415 750 1550 2000 1550 2000 40Z"/>
<filter id="rough" x="-5%" y="-5%" width="110%" height="110%"><feTurbulence type="fractalNoise" baseFrequency=".1" numOctaves="2" seed="4"/><feDisplacementMap in="SourceGraphic" scale="26" xChannelSelector="R" yChannelSelector="G"/></filter>
<filter id="b1" x="-30%" y="-30%" width="160%" height="160%"><feGaussianBlur stdDeviation="30"/></filter>
<filter id="b2" x="-30%" y="-30%" width="160%" height="160%"><feGaussianBlur stdDeviation="70"/></filter>
<clipPath id="land"><use href="#bound"/></clipPath>
</defs>
<g clip-path="url(#land)">
<path d="M0 0H2000V1550H0z" fill="#290d56"/>
<path d="M-100 200L600 -50 1200 0 1130 90 1000 200 740 270 560 370 400 470 250 560 330 720 400 790 300 900 400 1040 470 1120 590 1200 600 1340 580 1500 200 1600 -100 900Z" fill="#000003" opacity=".7" filter="url(#b2)"/>
<path d="M-50 200L600 -20 1020 40 900 110 680 160 500 270 360 360 220 500 190 640 260 740 240 850 300 930 360 1010 370 1130 450 1250 450 1360 400 1480 200 1500 0 900Z" fill="#000003" opacity=".9" filter="url(#b1)"/>
<g fill="none" stroke="#0b0420" stroke-width="6" opacity=".45"><path d="M380 785l40 25 60-5 60 15M380 980l50 30 80 10M560 1215l-12-10M470 1240l20 8M530 1280l90-40M520 1320l100 10 60 40M560 1080l30 60"/></g>
<g filter="url(#rough)" fill="#fff">
<use href="#sea"/>
<path d="M230 603L320 600 326 606 250 610 290 630 345 634 320 642 375 660 305 656 270 638ZM515 1035L545 1058 580 1090 594 1132 580 1138 545 1110 560 1095 508 1075 532 1070ZM632 1362L650 1370 692 1408 680 1410 650 1392ZM665 1318l15 0-5 6ZM672 400l20 0-5 8ZM718 388l14 3-5 10-8-2ZM1105 240l14-9 4 3-12 8ZM1175 207l8-1-1 5Z"/>
</g>
</g>
<path d="M765 1413L971 1383 1320 1391 1874 1464 1909 1046 1885 507 1803 158" fill="none" stroke="#fff" stroke-width="9"/>
<g fill="#2b0f5a"><path d="M1781 155l14-4 8 4-8 6zM1580 173h5v4h-5zM1598 162l10 5-5 4zM1827 278l6-2-4 6zM1788 288h4v3h-4zM795 1242h3v5h-3zM500 650h5v8h-5zM572 558h12v4h-12zM605 552h8v4h-8zM660 500h5v4h-5z"/></g>
<use href="#isl" fill="#0a0206"/>
<g fill="none" stroke="#e9141e" stroke-opacity=".36" stroke-width="19" stroke-linejoin="round"><use href="#bound"/><use href="#isl" stroke-width="14"/></g>
</svg>
</section>
<section class="right">
  <div class="rhead"><svg class="db"><use href="#float"/></svg><svg class="db"><use href="#close"/></svg></div>
  <div class="combo"><svg class="dd"><use href="#dd"/></svg></div>
  <div class="vsb"><i class="up"></i><b></b><em></em><i class="down"></i></div>
  <div class="rbtn"></div>
  <div class="rhead two"><svg class="db"><use href="#float"/></svg><svg class="db"><use href="#close"/></svg></div>
  <div class="rtable"><i></i><i class="a"></i><i></i><i class="s"></i></div>
  <div class="combo low"><svg class="dd"><use href="#dd"/></svg></div>
</section>
</main>

<aside class="dialog">
  <div class="dtitle"><span>Value Tool</span><button class="x">x</button></div>
  <div class="dbody">
    <label class="check"><i class="cb"><svg><use href="#chk"/></svg></i>Enable</label>
    <div class="tabs"><span class="tab on">Table</span><span class="tab t2">Graph</span><span class="tab t3">Options</span></div>
    <div class="panel">
      <div class="opts"><label class="check"><i class="cb"></i>Decimals</label><div class="spin"><span>2</span><b><i class="up"></i><i class="down"></i></b></div></div>
      <div class="grid">
        <div class="gh"><span>Layer</span><span class="val">Val</span></div>
        <div class="gr"><b>1</b><span>Output Band 1</span><span>1.0</span></div>
        <div class="gr sel"><b>2</b><span>clipped_Reprojected_Merged_SRTM Band 1</span><span>98.0</span></div>
        <div class="gr"><b>3</b><span>clipped_Reprojected_Merged_SRTM Band 2</span><span>255.0</span></div>
        <div class="gfill"></div>
        <div class="hsb"><b><i class="lf"></i></b><em></em><b class="r"><i class="rg"></i></b></div>
      </div>
    </div>
    <div class="coord">Coordinate:658113.6472543146,825669.5771966341,255.0</div>
  </div>
</aside>
</div>
</body>
</html>
```
FILE: styles.css
```css
* { box-sizing: border-box; }
html, body { margin: 0; }
body { width: 1917px; height: 1034px; overflow: hidden; font-family: "Open Sans", "Noto Sans", sans-serif; font-size: 16.6px; letter-spacing: -0.2px; color: #000; background: #efefef; }
i, em { font-style: normal; }
.defs { position: absolute; }
.app { position: relative; width: 1917px; height: 1034px; display: flex; flex-direction: column; overflow: hidden; }

.titlebar { height: 34px; background: #fff; display: flex; align-items: center; flex: none; }
.logo { width: 22px; height: 22px; margin-left: 0; }
.apptitle { margin-left: 6px; margin-top: -1px; color: #999; flex: 1; font-size: 17.4px; letter-spacing: 0.15px; }
.winctl { width: 160px; height: 16px; margin-right: 24px; margin-top: -1px; }

.menubar { height: 30px; flex: none; border-bottom: 1px solid #d0d0d0; background: #efefef; display: grid; grid-template-columns: 70px 47px 54px 58px 81px 74px 67px 67px 89px 55px 60px 101px 60px; padding: 2px 0 0 10px; align-items: center; color: #9b9b9b; font-size: 17.1px; letter-spacing: 0; }
.menubar u { text-underline-offset: 3px; text-decoration-thickness: 1px; text-decoration-skip-ink: none; }

.toolbar { height: 43px; flex: none; display: flex; align-items: center; background: linear-gradient(#fafafa, #efefef); border-bottom: 1px solid #b9b9b9; }
.toolbar.last { height: 42px; }
.toolbar > svg { width: 24px; height: 24px; margin: 0 4px 0 5px; flex: none; }
.toolbar > svg.dd, .ltools svg.dd { width: 12px; height: 7px; margin: 0 3px; fill: #555; flex: none; }
.toolbar svg.dim, .ltools svg.dim { fill: #a9a9a9; }
.off { opacity: .36; filter: grayscale(.6); }
.grip { width: 24px; height: 17px; flex: none; background: radial-gradient(circle, #aaa 0 .7px, transparent .9px) 14px 0 / 4px 3px; background-clip: content-box; padding-left: 14px; padding-right: 4px; }
.grip.first { width: 15px; padding-left: 6px; padding-right: 3px; }
.sep { width: 5px; height: 19px; flex: none; border-left: 1px solid #c6c6c6; margin-left: 5px; }
.pressed { width: 32px; height: 31px; margin-right: 1px; flex: none; border: 1px solid #ababab; border-radius: 3px; background: #dadada; display: flex; align-items: center; justify-content: center; }
.pressed svg { width: 24px; height: 24px; }

.work { flex: 1; display: flex; min-height: 0; }
.layers { width: 577px; display: flex; flex-direction: column; }
.dockhead { height: 25px; display: flex; align-items: center; padding: 0 1px 0 1px; gap: 3px; font-size: 17px; }
.dockhead span { flex: 1; margin-top: -1px; }
.db { width: 12px; height: 12px; flex: none; margin-bottom: 2px; }
.ltools { height: 32px; display: flex; align-items: center; padding: 0 0 3px 3px; gap: 8px; }
.ltools > svg { width: 17px; height: 17px; flex: none; }
.ltools svg.dd { margin: 0 1px 0 -2px; }
.lbtn { width: 24px; height: 23px; margin-right: -3px; border: 1px solid #ababab; border-radius: 3px; background: #dadada; display: flex; align-items: center; justify-content: center; }
.lbtn svg { width: 17px; height: 17px; }
.tree { flex: 1; background: #fff; border-top: 1px solid #b4b4b4; border-right: 1px solid #b4b4b4; padding-top: 1px; }
.row { height: 27px; display: flex; align-items: center; padding-left: 7px; padding-right: 9px; }
.row.sub { padding-left: 37px; }
.row.lg1 { padding-left: 61px; }
.row.lg2 { padding-left: 91px; }
.tw { width: 24px; height: 12px; flex: none; margin-top: -1px; display: flex; align-items: center; }
.tw.dn::before { content: ""; border: 6px solid transparent; border-top: 7px solid #5c5c5c; border-bottom: 0; }
.tw.rt::before { content: ""; margin-left: 3px; border: 6px solid transparent; border-left: 6px solid #4c4c4c; border-right: 0; }
.cb { width: 21px; height: 21px; flex: none; background: #fff; border: 1px solid #b5b5b5; box-shadow: inset 0 1px 1px #e4e4e4; display: block; }
.row .cb { margin-top: -2px; }
.cb svg { width: 19px; height: 19px; display: block; }
.ic { width: 20px; height: 20px; margin-left: 9px; margin-top: -2px; flex: none; }
.ic.g { width: 20px; height: 22px; margin-left: 8px; margin-right: 1px; margin-top: -4px; }
.bnd { width: 22px; height: 22px; margin: -4px 0 0 6px; border: 3px solid #f4a9ab; background: #fff; }
.nm { margin-left: 7px; margin-top: -2px; white-space: nowrap; line-height: 27px; letter-spacing: -0.05px; }
.nm.up4 { letter-spacing: 0.15px; }
.lg1 .nm, .lg2 .nm { margin-left: 6px; }
.bold { font-weight: 700; font-size: 17px; letter-spacing: 0; }
.nm.bn { margin-left: 6px; letter-spacing: 0; }
.nm.long { letter-spacing: 0.13px; }
.un { text-decoration: underline; text-underline-offset: 3px; text-decoration-skip-ink: none; }
.nm.hid { font-weight: 700; font-style: italic; color: #808080; font-size: 17.4px; letter-spacing: 0.17px; }
.nm.caps { letter-spacing: 0.5px; }
.mem { margin-left: auto; margin-top: -2px; width: 24px; height: 24px; border: 1px solid #e2e2e2; border-radius: 3px; background: #f7f7f7; display: flex; align-items: center; justify-content: center; }
.mem svg { width: 20px; height: 20px; }
.sw { width: 20px; height: 20px; margin-top: -3px; }
.k { background: #000; } .c0 { background: #000004; } .c1 { background: #2d1160; } .c2 { background: #721f81; } .c3 { background: #b63679; } .c4 { background: #f1605d; } .c5 { background: #feaf77; } .c6 { background: #fcfdbf; }
.split { width: 9px; display: flex; align-items: center; }
.split i { width: 2px; height: 17px; margin: 50px 0 0 5px; background: radial-gradient(circle, #aaa 0 .7px, transparent .9px) 0 0 / 2px 3px; }
.map { width: 717px; margin-top: 1px; border: 1px solid #b4b4b4; border-bottom: 0; background: #fff; overflow: hidden; }
.map svg { display: block; }

.right { flex: 1; display: flex; flex-direction: column; overflow: hidden; padding-left: 588px; }
.rhead { display: flex; gap: 3px; padding: 5px 2px 0 0; height: 25px; justify-content: flex-end; flex: none; }
.rhead.two { margin-top: 6px; height: 100px; border-top: 1px solid #c2c2c2; padding-top: 48px; }
.combo { height: 32px; margin-right: 4px; border: 1px solid #b0b0b0; border-radius: 3px; background: linear-gradient(#fafafa, #ededed); display: flex; align-items: center; padding-left: 1px; flex: none; }
.combo .dd { width: 12px; height: 7px; fill: #555; }
.vsb { height: 222px; margin: 9px 4px 0 0; display: flex; flex-direction: column; flex: none; }
.vsb i { height: 20px; display: flex; align-items: center; justify-content: center; padding-left: 8px; }
.vsb b { height: 45px; background: #f6f6f6; border: solid #b9b9b9; border-width: 1px 0; }
.vsb em { flex: 1; background: #e2e2e2; border-bottom: 1px solid #b9b9b9; }
.up::before { content: ""; border: 6px solid transparent; border-bottom: 6px solid #555; border-top: 0; }
.down::before { content: ""; border: 6px solid transparent; border-top: 6px solid #555; border-bottom: 0; }
.rbtn { height: 30px; margin: 2px 4px 0 0; border: 1px solid #b0b0b0; border-radius: 3px; background: linear-gradient(#f8f8f8, #ececec); flex: none; }
.rtable { height: 387px; border: 1px solid #b4b4b4; border-left: 0; padding-top: 30px; background: linear-gradient(#fbfbfb, #e8e8e8) 0 0 / 100% 30px no-repeat #fff; flex: none; }
.rtable i { display: block; height: 25px; }
.rtable i:first-child { border-top: 1px solid #aaa; }
.rtable .a { background: #ebebeb; } .rtable .s { background: #dedcd6; }
.combo.low { margin-top: 5px; }

.dialog { position: absolute; left: 1304px; top: 145px; width: 592px; height: 888px; background: #efefef; border-top: 1px solid #d5d5d5; box-shadow: 0 0 9px 1px rgba(0,0,0,.42); display: flex; flex-direction: column; }
.dtitle { height: 44px; flex: none; background: #fff; display: flex; align-items: center; padding: 1px 1px 0 11px; font-size: 16.9px; }
.dtitle span { flex: 1; }
.x { width: 30px; height: 30px; margin-top: 5px; border: 0; padding: 0 0 1px; background: #c75050; color: #fff; font: bold 15px/28px "Open Sans", sans-serif; }
.dbody { flex: 1; padding: 0 13px; display: flex; flex-direction: column; }
.check { display: flex; align-items: center; gap: 8px; letter-spacing: -0.8px; }
.dbody > .check { margin-top: 15px; height: 21px; letter-spacing: -0.6px; }
.tabs { display: flex; align-items: flex-end; height: 36px; margin-top: 10px; margin-bottom: -1px; z-index: 1; position: relative; }
.tab { height: 34px; border: 1px solid #b4b4b4; border-left: 0; border-radius: 0 3px 0 0; background: #e9e9e9; text-align: center; line-height: 35px; letter-spacing: -0.4px; }
.tab.on { height: 36px; width: 76px; background: #fdfdfd; border-left: 1px solid #b4b4b4; border-bottom: 0; border-radius: 3px 3px 0 0; line-height: 37px; }
.t2 { width: 78px; } .t3 { width: 91px; letter-spacing: -0.1px; }
.panel { height: 720px; border: 1px solid #b4b4b4; background: #fdfdfd; padding: 14px 14px 13px; display: flex; flex-direction: column; }
.opts { display: flex; align-items: center; height: 28px; }
.opts .check { width: 107px; }
.spin { width: 49px; height: 27px; border: 1px solid #b0b0b0; border-radius: 3px; background: #fff; display: flex; overflow: hidden; }
.spin span { width: 27px; padding-left: 4px; line-height: 26px; }
.spin b { flex: 1; border-left: 1px solid #c0c0c0; background: linear-gradient(#fcfcfc, #eee); display: flex; flex-direction: column; align-items: center; justify-content: center; gap: 5px; }
.spin i { height: 6px; display: flex; }
.grid { flex: 1; margin-top: 10px; border: 1px solid #b4b4b4; background: #fff; display: flex; flex-direction: column; overflow: hidden; }
.gh { height: 31px; display: grid; grid-template-columns: 414px 120px; background: linear-gradient(#fdfdfd, #ebebeb); border-bottom: 1px solid #a8a8a8; font-weight: 700; text-align: center; line-height: 34px; letter-spacing: -0.2px; flex: none; }
.gh span { border-right: 1px solid #c4c4c4; padding-left: 17px; height: 30px; }
.gh .val { padding-left: 93px; text-align: left; border-right: 0; }
.gr { height: 45px; display: grid; grid-template-columns: 16px 398px 1fr; border-bottom: 1px solid #c4c4c4; line-height: 46px; flex: none; }
.gr b { font-weight: 400; background: linear-gradient(#fcfcfc, #ededed); border-right: 1px solid #a8a8a8; padding-left: 3px; }
.gr span { padding-left: 3px; border-right: 1px solid #c4c4c4; white-space: nowrap; letter-spacing: 0.2px; }
.gr span:last-child { border-right: 0; letter-spacing: 0; }
.gr.sel span { background: linear-gradient(#1a86dd, #0a7bdb); color: #fff; }
.gr.sel span:last-child { background: #0078d7; }
.gr.sel b { font-weight: 700; }
.gfill { flex: 1; border-left: 16px solid #efefef; }
.hsb { height: 21px; border-top: 1px solid #b9b9b9; display: flex; flex: none; background: #e5e5e5; }
.hsb b { width: 21px; background: #fcfcfc; display: flex; align-items: center; justify-content: center; border-right: 1px solid #c4c4c4; }
.hsb em { width: 247px; margin-right: auto; background: linear-gradient(#fff, #f1f1f1); border-right: 1px solid #b9b9b9; }
.hsb b.r { border-right: 0; border-left: 1px solid #b9b9b9; }
.lf { border: 5px solid transparent; border-right: 6px solid #4c4c4c; border-left: 0; }
.rg { border: 5px solid transparent; border-left: 6px solid #4c4c4c; border-right: 0; }
.coord { margin-top: 7px; line-height: 26px; font-size: 15.8px; letter-spacing: 0; white-space: nowrap; }
```
